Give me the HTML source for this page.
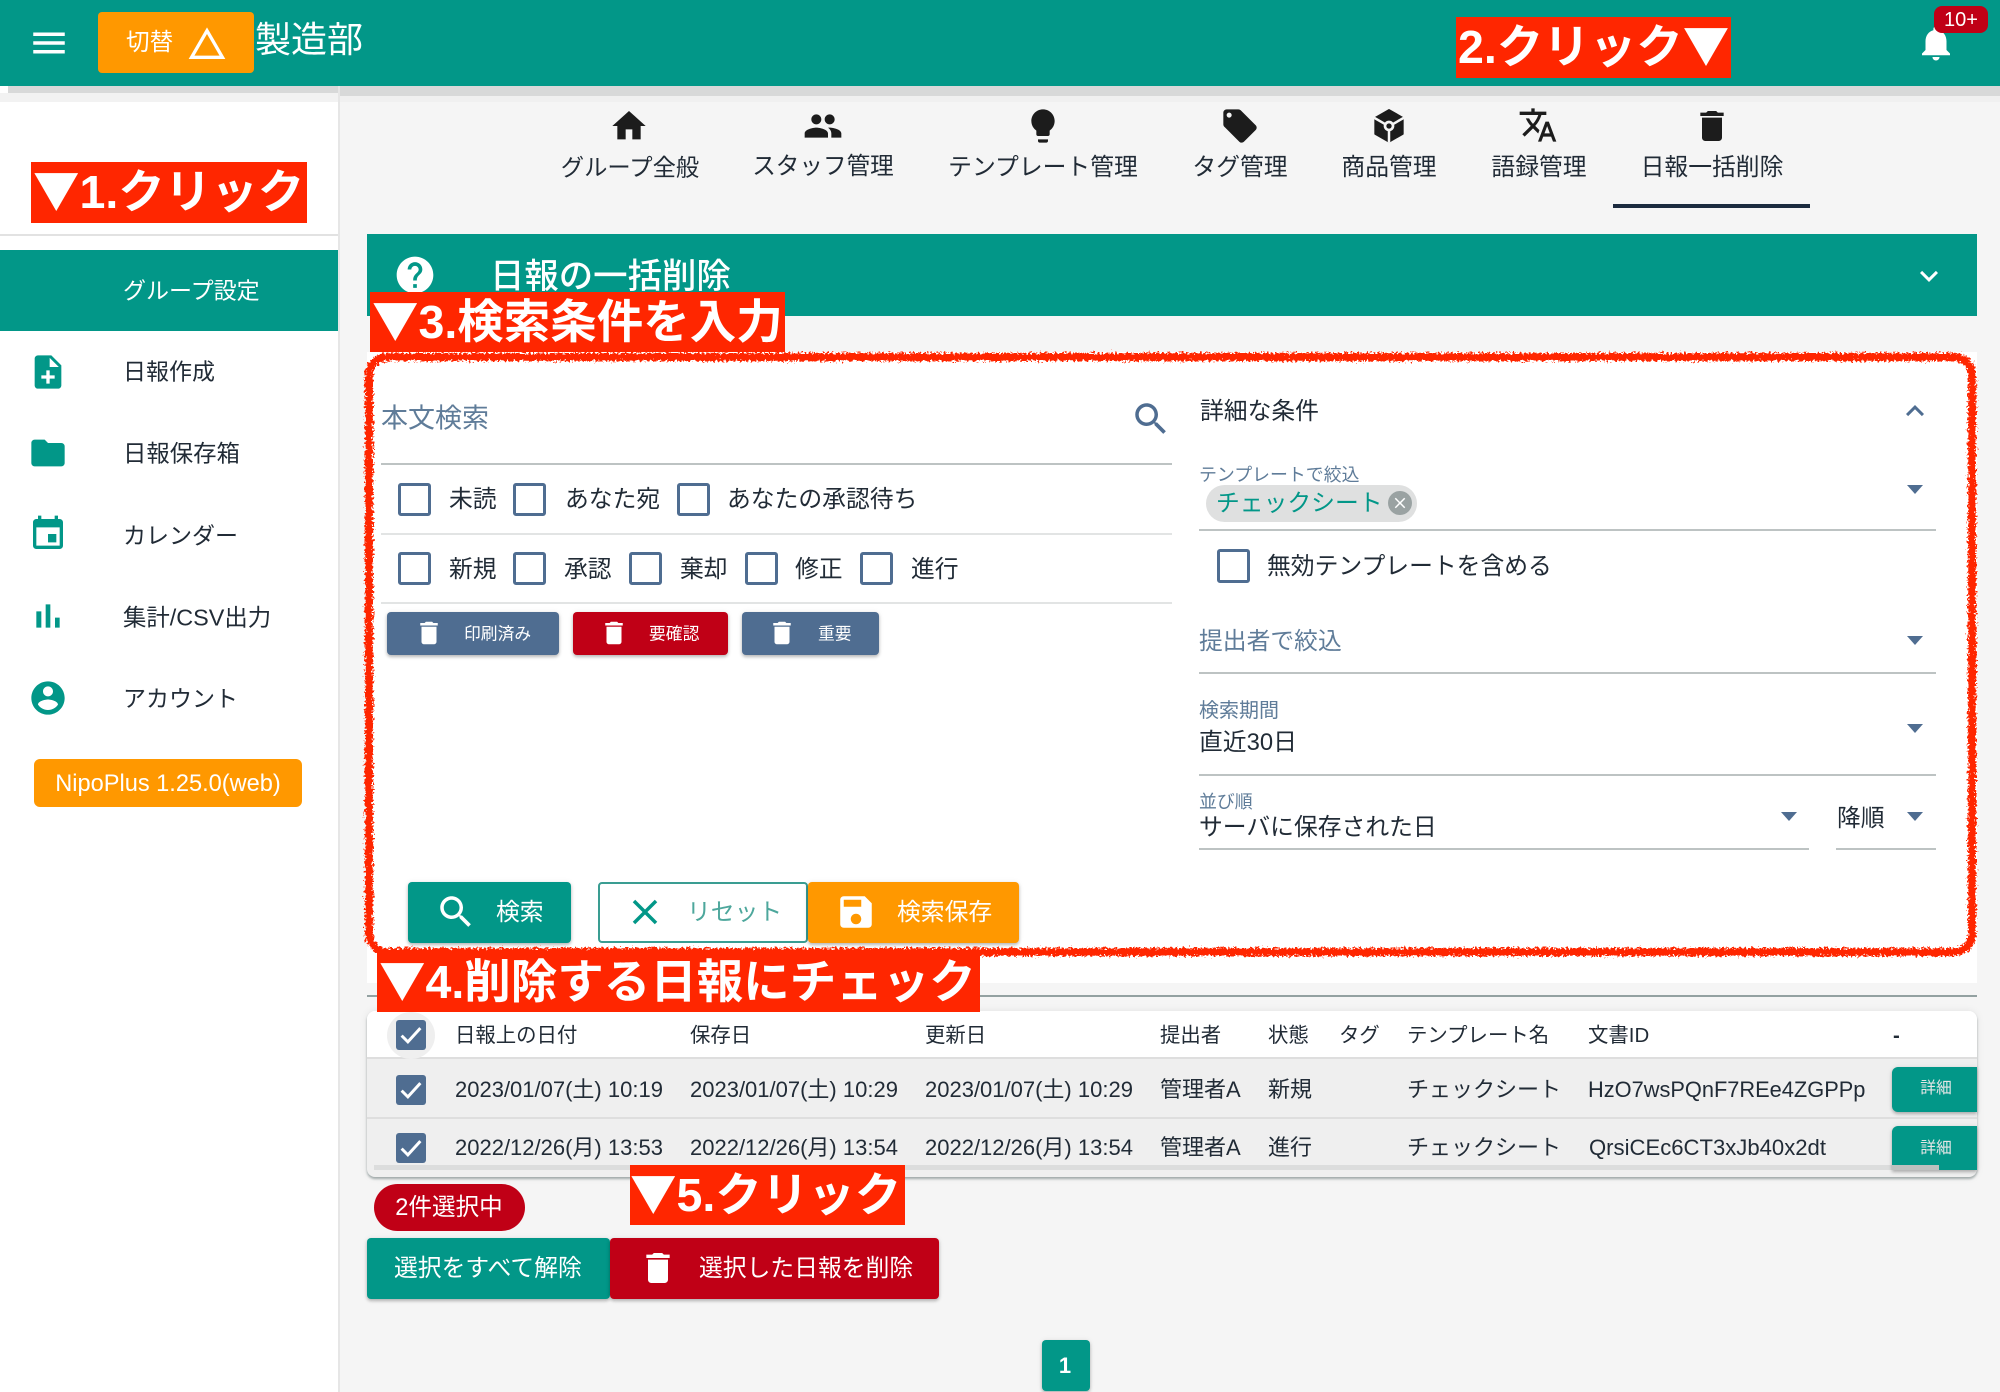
<!DOCTYPE html>
<html lang="ja"><head><meta charset="utf-8"><title>日報の一括削除</title>
<style>
*{box-sizing:border-box}
html,body{margin:0;padding:0;width:2000px;height:1392px;overflow:hidden;background:#f5f5f5}
body{position:relative;font-family:"Liberation Sans","Noto Sans CJK JP",sans-serif;color:#212b36;font-size:23.8px}
.b{position:absolute}
.t{position:absolute;white-space:nowrap;line-height:1;transform:translateY(calc(-50% + 2px))}
.c{position:absolute;white-space:nowrap;line-height:1;transform:translate(-50%,calc(-50% + 2px))}
.lab{position:absolute;background:#ff2600;color:#fff;font-weight:700;font-size:46.5px;line-height:54px;white-space:nowrap;overflow:hidden;padding-left:2px}
.lab span{font-family:"Noto Sans CJK JP",sans-serif}
.i{position:absolute;display:block}
.cb{position:absolute;width:33px;height:33px;border:3.5px solid #4f6d91;border-radius:3px;background:#fff}
.ck{position:absolute;width:30px;height:30px;border-radius:3px;background:#4f6d91}
.line{position:absolute;height:2px;background:#bdc3c3}
.line2{position:absolute;height:2px;background:#e2e4e4}
.btn{position:absolute;border-radius:4px;box-shadow:0 2px 3px rgba(0,0,0,.25),0 0 6px rgba(0,0,0,.07)}
.lbl{color:#5f7c99}
.car{position:absolute;width:0;height:0;border-left:8px solid transparent;border-right:8px solid transparent;border-top:9px solid #4f6d91}
</style></head><body>
<svg width="0" height="0" style="position:absolute"><defs>
<symbol id="menu" viewBox="0 0 24 24"><path d="M3 18h18v-2H3v2zm0-5h18v-2H3v2zm0-7v2h18V6H3z"/></symbol>
<symbol id="warn" viewBox="0 0 24 24"><path d="M12 5.99L19.53 19H4.47L12 5.99M12 2L1 21h22L12 2z"/></symbol>
<symbol id="home" viewBox="0 0 24 24"><path d="M10 20v-6h4v6h5v-8h3L12 3 2 12h3v8z"/></symbol>
<symbol id="people" viewBox="0 0 24 24"><path d="M16 11c1.66 0 2.99-1.34 2.99-3S17.66 5 16 5c-1.66 0-3 1.34-3 3s1.34 3 3 3zm-8 0c1.66 0 2.99-1.34 2.99-3S9.66 5 8 5C6.34 5 5 6.34 5 8s1.34 3 3 3zm0 2c-2.33 0-7 1.17-7 3.5V19h14v-2.5c0-2.33-4.67-3.5-7-3.5zm8 0c-.29 0-.62.02-.97.05 1.16.84 1.97 1.97 1.97 3.45V19h6v-2.5c0-2.33-4.67-3.5-7-3.5z"/></symbol>
<symbol id="bulb" viewBox="0 0 24 24"><path d="M9 21c0 .55.45 1 1 1h4c.55 0 1-.45 1-1v-1H9v1zm3-19C8.14 2 5 5.14 5 9c0 2.38 1.19 4.47 3 5.74V17c0 .55.45 1 1 1h6c.55 0 1-.45 1-1v-2.26c1.81-1.27 3-3.36 3-5.74 0-3.86-3.14-7-7-7z"/></symbol>
<symbol id="tag" viewBox="0 0 24 24"><path d="M21.41 11.58l-9-9C12.05 2.22 11.55 2 11 2H4c-1.1 0-2 .9-2 2v7c0 .55.22 1.05.59 1.42l9 9c.36.36.86.58 1.41.58.55 0 1.05-.22 1.41-.59l7-7c.37-.36.59-.86.59-1.41 0-.55-.23-1.06-.59-1.42zM5.5 7C4.67 7 4 6.33 4 5.5S4.67 4 5.5 4 7 4.67 7 5.5 6.33 7 5.5 7z"/></symbol>
<symbol id="box" viewBox="0 0 24 24"><path d="M12 2.2L20.4 7v9.8L12 21.6l-8.4-4.8V7z" stroke="#1c1c1c" stroke-width=".8" stroke-linejoin="round"/><path d="M3 7l9 5.2M21 7l-9 5.2M12 12v10" fill="none" stroke="#f5f5f5" stroke-width="1.5"/><circle cx="12" cy="12" r="3.2" fill="#f5f5f5"/><circle cx="12" cy="12" r="1.6"/></symbol>
<symbol id="trans" viewBox="0 0 24 24"><path d="M12.87 15.07l-2.54-2.51.03-.03c1.74-1.94 2.98-4.17 3.71-6.53H17V4h-7V2H8v2H1v1.99h11.17C11.5 7.92 10.44 9.75 9 11.35 8.07 10.32 7.3 9.19 6.69 8h-2c.73 1.63 1.73 3.17 2.98 4.56l-5.09 5.02L4 19l5-5 3.11 3.11.76-2.04zM18.5 10h-2L12 22h2l1.12-3h4.75L21 22h2l-4.5-12zm-2.62 7l1.62-4.33L19.12 17h-3.24z"/></symbol>
<symbol id="del" viewBox="0 0 24 24"><path d="M6 19c0 1.1.9 2 2 2h8c1.1 0 2-.9 2-2V7H6v12zM19 4h-3.5l-1-1h-5l-1 1H5v2h14V4z"/></symbol>
<symbol id="help" viewBox="0 0 24 24"><path d="M12 2C6.48 2 2 6.48 2 12s4.48 10 10 10 10-4.48 10-10S17.52 2 12 2zm1 17h-2v-2h2v2zm2.07-7.75l-.9.92C13.45 12.9 13 13.5 13 15h-2v-.5c0-1.1.45-2.1 1.17-2.83l1.24-1.26c.37-.36.59-.86.59-1.41 0-1.1-.9-2-2-2s-2 .9-2 2H8c0-2.21 1.79-4 4-4s4 1.79 4 4c0 .88-.36 1.68-.93 2.25z"/></symbol>
<symbol id="more" viewBox="0 0 24 24"><path d="M16.59 8.59L12 13.17 7.41 8.59 6 10l6 6 6-6z"/></symbol>
<symbol id="less" viewBox="0 0 24 24"><path d="M12 8l-6 6 1.41 1.41L12 10.83l4.59 4.58L18 14z"/></symbol>
<symbol id="search" viewBox="0 0 24 24"><path d="M15.5 14h-.79l-.28-.27C15.41 12.59 16 11.11 16 9.5 16 5.91 13.09 3 9.5 3S3 5.91 3 9.5 5.91 16 9.5 16c1.61 0 3.09-.59 4.23-1.57l.27.28v.79l5 4.99L20.49 19l-4.99-5zm-6 0C7.01 14 5 11.99 5 9.5S7.01 5 9.5 5 14 7.01 14 9.5 11.99 14 9.5 14z"/></symbol>
<symbol id="close" viewBox="0 0 24 24"><path d="M19 6.41L17.59 5 12 10.59 6.41 5 5 6.41 10.59 12 5 17.59 6.41 19 12 13.41 17.59 19 19 17.59 13.41 12 19 6.41z"/></symbol>
<symbol id="save" viewBox="0 0 24 24"><path d="M17 3H5c-1.11 0-2 .9-2 2v14c0 1.1.89 2 2 2h14c1.1 0 2-.9 2-2V7l-4-4zm-5 16c-1.66 0-3-1.34-3-3s1.34-3 3-3 3 1.34 3 3-1.34 3-3 3zm3-10H5V5h10v4z"/></symbol>
<symbol id="note" viewBox="0 0 24 24"><path d="M14 2H6c-1.1 0-1.99.9-1.99 2L4 20c0 1.1.89 2 1.99 2H18c1.1 0 2-.9 2-2V8l-6-6zm2 14h-3v3h-2v-3H8v-2h3v-3h2v3h3v2zm-3-7V3.5L18.5 9H13z"/></symbol>
<symbol id="folder" viewBox="0 0 24 24"><path d="M10 4H4c-1.1 0-1.99.9-1.99 2L2 18c0 1.1.9 2 2 2h16c1.1 0 2-.9 2-2V8c0-1.1-.9-2-2-2h-8l-2-2z"/></symbol>
<symbol id="event" viewBox="0 0 24 24"><path d="M17 12h-5v5h5v-5zM16 1v2H8V1H6v2H5c-1.11 0-1.99.9-1.99 2L3 19c0 1.1.89 2 2 2h14c1.1 0 2-.9 2-2V5c0-1.1-.9-2-2-2h-1V1h-2zm3 18H5V8h14v11z"/></symbol>
<symbol id="bar" viewBox="0 0 24 24"><path d="M5 9.2h3V19H5zM10.6 5h2.8v14h-2.8zm5.6 8H19v6h-2.8z"/></symbol>
<symbol id="acct" viewBox="0 0 24 24"><path d="M12 2C6.48 2 2 6.48 2 12s4.48 10 10 10 10-4.48 10-10S17.52 2 12 2zm0 3c1.66 0 3 1.34 3 3s-1.34 3-3 3-3-1.34-3-3 1.34-3 3-3zm0 14.2c-2.5 0-4.71-1.28-6-3.22.03-1.99 4-3.08 6-3.08 1.99 0 5.97 1.09 6 3.08-1.29 1.94-3.5 3.22-6 3.22z"/></symbol>
<symbol id="bell" viewBox="0 0 24 24"><path d="M12 22c1.1 0 2-.9 2-2h-4c0 1.1.89 2 2 2zm6-6v-5c0-3.07-1.64-5.64-4.5-6.32V4c0-.83-.67-1.5-1.5-1.5s-1.5.67-1.5 1.5v.68C7.63 5.36 6 7.92 6 11v5l-2 2v1h16v-1l-2-2z"/></symbol>
<symbol id="chk" viewBox="0 0 24 24"><path d="M4.5 12.5l5 5L19.5 6.5" fill="none" stroke="#fff" stroke-width="2.4"/></symbol>
<filter id="rough" x="-2%" y="-4%" width="104%" height="108%"><feTurbulence type="fractalNoise" baseFrequency=".45" numOctaves="3" seed="4"/><feDisplacementMap in="SourceGraphic" scale="8" xChannelSelector="R" yChannelSelector="G"/></filter>
</defs></svg>

<!-- sidebar -->
<div class="b" style="left:0;top:85px;width:338px;height:1307px;background:#fff"></div>
<div class="b" style="left:338px;top:85px;width:2px;height:1307px;background:#e6e6e6"></div>
<!-- header shadow -->
<div class="b" style="left:0;top:93px;width:338px;height:9px;background:#f2f2f2"></div>
<div class="b" style="left:340px;top:96px;width:1660px;height:6px;background:#f0f0f0"></div>
<div class="b" style="left:8px;top:85px;width:330px;height:8px;background:#d8d9d9"></div>
<div class="b" style="left:340px;top:85px;width:1660px;height:11px;background:#d8d9d9"></div>
<!-- header -->
<div class="b" style="left:0;top:0;width:2000px;height:85.5px;background:#029788"></div>
<svg class="i" style="left:28px;top:22px" width="42" height="42" fill="#fff"><use href="#menu"/></svg>
<div class="b" style="left:98px;top:12px;width:156px;height:61px;background:#ff9800;border-radius:4px"></div>
<div class="t" style="left:126px;top:42px;color:#fff;font-size:23.6px">切替</div>
<svg class="i" style="left:187px;top:24px" width="40" height="40" fill="#fff"><use href="#warn"/></svg>
<div class="t" style="left:255px;top:38px;color:#fff;font-size:36px">製造部</div>
<svg class="i" style="left:1915px;top:22px" width="42" height="42" fill="#fff"><use href="#bell"/></svg>
<div class="b" style="left:1934px;top:6px;width:54px;height:27px;background:#c00016;border-radius:8px"></div>
<div class="c" style="left:1961px;top:18px;color:#fff;font-size:20px">10+</div>

<!-- sidebar content -->
<div class="b" style="left:0;top:234px;width:338px;height:2px;background:#e2e2e2"></div>
<div class="b" style="left:0;top:250px;width:338px;height:81px;background:#029788"></div>
<div class="t" style="left:123px;top:289px;color:#fff;font-size:23px">グループ設定</div>
<svg class="i" style="left:28px;top:352px" width="40" height="40" fill="#029788"><use href="#note"/></svg>
<div class="t" style="left:123px;top:370px;font-size:23px">日報作成</div>
<svg class="i" style="left:28px;top:433px" width="40" height="40" fill="#029788"><use href="#folder"/></svg>
<div class="t" style="left:123px;top:452px;font-size:23.4px">日報保存箱</div>
<svg class="i" style="left:28px;top:514px" width="40" height="40" fill="#029788"><use href="#event"/></svg>
<div class="t" style="left:123px;top:534px;font-size:23px">カレンダー</div>
<svg class="i" style="left:28px;top:596px" width="40" height="40" fill="#029788"><use href="#bar"/></svg>
<div class="t" style="left:123px;top:616px;font-size:23.4px">集計/CSV出力</div>
<svg class="i" style="left:28px;top:678px" width="40" height="40" fill="#029788"><use href="#acct"/></svg>
<div class="t" style="left:123px;top:697px;font-size:23px">アカウント</div>
<div class="b" style="left:34px;top:759px;width:268px;height:48px;background:#ff9800;border-radius:6px"></div>
<div class="c" style="left:168px;top:783px;color:#fff;font-size:23.6px">NipoPlus 1.25.0(web)</div>

<!-- tabs -->
<svg class="i" style="left:609px;top:106px" width="40" height="40" fill="#1c1c1c"><use href="#home"/></svg>
<div class="c" style="left:630px;top:166px;font-size:23.3px">グループ全般</div>
<svg class="i" style="left:803px;top:106px" width="40" height="40" fill="#1c1c1c"><use href="#people"/></svg>
<div class="c" style="left:823px;top:166px;font-size:23.6px">スタッフ管理</div>
<svg class="i" style="left:1023px;top:106px" width="40" height="40" fill="#1c1c1c"><use href="#bulb"/></svg>
<div class="c" style="left:1043px;top:166px;font-size:23.8px">テンプレート管理</div>
<svg class="i" style="left:1220px;top:106px" width="40" height="40" fill="#1c1c1c"><use href="#tag"/></svg>
<div class="c" style="left:1240px;top:166px;font-size:23.8px">タグ管理</div>
<svg class="i" style="left:1369px;top:106px" width="40" height="40" fill="#1c1c1c"><use href="#box"/></svg>
<div class="c" style="left:1389px;top:166px;font-size:23.8px">商品管理</div>
<svg class="i" style="left:1518px;top:105px" width="40" height="40" fill="#1c1c1c"><use href="#trans"/></svg>
<div class="c" style="left:1539px;top:166px;font-size:23.8px">語録管理</div>
<svg class="i" style="left:1692px;top:106px" width="40" height="40" fill="#1c1c1c"><use href="#del"/></svg>
<div class="c" style="left:1712px;top:166px;font-size:23.8px">日報一括削除</div>
<div class="b" style="left:1613px;top:204px;width:197px;height:4px;background:#1c2b3f"></div>

<!-- panel header -->
<div class="b" style="left:367px;top:234px;width:1610px;height:82px;background:#029788"></div>
<svg class="i" style="left:393px;top:253px" width="44" height="44" fill="#fff"><use href="#help"/></svg>
<div class="t" style="left:490px;top:275px;color:#fff;font-size:34.4px;font-weight:500">日報の一括削除</div>
<svg class="i" style="left:1911px;top:258px" width="36" height="36" fill="#fff"><use href="#more"/></svg>

<!-- white panel -->
<div class="b" style="left:367px;top:352px;width:1610px;height:631px;background:#fff"></div>

<!-- search left -->
<div class="t lbl" style="left:381px;top:417px;font-size:27px">本文検索</div>
<svg class="i" style="left:1130px;top:398px" width="42" height="42" fill="#4f6d91"><use href="#search"/></svg>
<div class="line" style="left:381px;top:463px;width:791px"></div>
<div class="cb" style="left:398px;top:483px"></div><div class="t" style="left:449px;top:498px">未読</div>
<div class="cb" style="left:513px;top:483px"></div><div class="t" style="left:565px;top:498px">あなた宛</div>
<div class="cb" style="left:677px;top:483px"></div><div class="t" style="left:727px;top:498px">あなたの承認待ち</div>
<div class="line2" style="left:381px;top:533px;width:791px"></div>
<div class="cb" style="left:398px;top:552px"></div><div class="t" style="left:449px;top:568px">新規</div>
<div class="cb" style="left:513px;top:552px"></div><div class="t" style="left:564px;top:568px">承認</div>
<div class="cb" style="left:629px;top:552px"></div><div class="t" style="left:680px;top:568px">棄却</div>
<div class="cb" style="left:745px;top:552px"></div><div class="t" style="left:795px;top:568px">修正</div>
<div class="cb" style="left:860px;top:552px"></div><div class="t" style="left:911px;top:568px">進行</div>
<div class="line2" style="left:381px;top:602px;width:791px"></div>

<div class="btn" style="left:387px;top:612px;width:172px;height:43px;background:#4f6d91"></div>
<svg class="i" style="left:414px;top:618px" width="30" height="30" fill="#fff"><use href="#del"/></svg>
<div class="t" style="left:464px;top:633px;color:#fff;font-size:16.8px">印刷済み</div>
<div class="btn" style="left:573px;top:612px;width:155px;height:43px;background:#c00016"></div>
<svg class="i" style="left:599px;top:618px" width="30" height="30" fill="#fff"><use href="#del"/></svg>
<div class="t" style="left:649px;top:633px;color:#fff;font-size:16.8px">要確認</div>
<div class="btn" style="left:742px;top:612px;width:137px;height:43px;background:#4f6d91"></div>
<svg class="i" style="left:767px;top:618px" width="30" height="30" fill="#fff"><use href="#del"/></svg>
<div class="t" style="left:818px;top:633px;color:#fff;font-size:16.8px">重要</div>

<!-- right col -->
<div class="t" style="left:1200px;top:410px">詳細な条件</div>
<svg class="i" style="left:1897px;top:393px" width="36" height="36" fill="#4f6d91"><use href="#less"/></svg>
<div class="t lbl" style="left:1199px;top:474px;font-size:17.9px">テンプレートで絞込</div>
<div class="b" style="left:1206px;top:485px;width:211px;height:37px;background:#dfe0e0;border-radius:19px"></div>
<div class="t" style="left:1216px;top:502px;color:#029788">チェックシート</div>
<div class="b" style="left:1388px;top:491px;width:24px;height:24px;border-radius:50%;background:#9aa2a2"></div>
<svg class="i" style="left:1391px;top:494px" width="18" height="18" fill="#fff"><use href="#close"/></svg>
<div class="car" style="left:1907px;top:485px"></div>
<div class="line" style="left:1199px;top:529px;width:737px"></div>
<div class="cb" style="left:1217px;top:549px;height:34px"></div>
<div class="t" style="left:1267px;top:565px">無効テンプレートを含める</div>
<div class="t lbl" style="left:1199px;top:640px">提出者で絞込</div>
<div class="car" style="left:1907px;top:636px"></div>
<div class="line" style="left:1199px;top:672px;width:737px"></div>
<div class="t lbl" style="left:1199px;top:709px;font-size:20px">検索期間</div>
<div class="t" style="left:1199px;top:741px">直近30日</div>
<div class="car" style="left:1907px;top:724px"></div>
<div class="line" style="left:1199px;top:774px;width:737px"></div>
<div class="t lbl" style="left:1199px;top:801px;font-size:17.9px">並び順</div>
<div class="t" style="left:1199px;top:826px">サーバに保存された日</div>
<div class="car" style="left:1781px;top:812px"></div>
<div class="line" style="left:1199px;top:848px;width:610px"></div>
<div class="t" style="left:1837px;top:817px">降順</div>
<div class="car" style="left:1907px;top:812px"></div>
<div class="line" style="left:1836px;top:848px;width:100px"></div>

<!-- action buttons -->
<div class="btn" style="left:408px;top:882px;width:163px;height:61px;background:#029788"></div>
<svg class="i" style="left:435px;top:891px" width="42" height="42" fill="#fff"><use href="#search"/></svg>
<div class="t" style="left:496px;top:911px;color:#fff">検索</div>
<div class="b" style="left:598px;top:882px;width:210px;height:61px;background:#fff;border:2px solid #3a9d92;border-radius:4px"></div>
<svg class="i" style="left:624px;top:891px" width="42" height="42" fill="#029788"><use href="#close"/></svg>
<div class="t" style="left:687px;top:911px;color:#4da79c">リセット</div>
<div class="btn" style="left:808px;top:882px;width:211px;height:61px;background:#ff9800"></div>
<svg class="i" style="left:835px;top:891px" width="42" height="42" fill="#fff"><use href="#save"/></svg>
<div class="t" style="left:897px;top:911px;color:#fff">検索保存</div>

<!-- divider -->
<div class="b" style="left:367px;top:995px;width:1610px;height:2px;background:#93a1a1"></div>

<!-- table -->
<div class="b" style="left:367px;top:1011px;width:1610px;height:166px;background:#efefef;border-radius:8px;box-shadow:0 2px 2px rgba(70,90,90,.45),0 0 8px rgba(0,0,0,.08)"></div>
<div class="b" style="left:367px;top:1011px;width:1610px;height:48px;background:#fff;border-radius:8px 8px 0 0;border-bottom:2px solid #dedede"></div>
<div class="b" style="left:367px;top:1117px;width:1610px;height:2px;background:#dedede"></div>
<div class="b" style="left:387px;top:1012px;width:48px;height:47px;border-radius:50%;background:#efefef"></div>
<div class="ck" style="left:396px;top:1020px"></div><svg class="i" style="left:396px;top:1020px" width="30" height="30"><use href="#chk"/></svg>
<div class="ck" style="left:396px;top:1075px"></div><svg class="i" style="left:396px;top:1075px" width="30" height="30"><use href="#chk"/></svg>
<div class="ck" style="left:396px;top:1133px"></div><svg class="i" style="left:396px;top:1133px" width="30" height="30"><use href="#chk"/></svg>

<div class="t" style="left:455px;top:1034px;font-size:20.4px">日報上の日付</div>
<div class="t" style="left:690px;top:1034px;font-size:20.4px">保存日</div>
<div class="t" style="left:925px;top:1034px;font-size:20.4px">更新日</div>
<div class="t" style="left:1160px;top:1034px;font-size:20.4px">提出者</div>
<div class="t" style="left:1268px;top:1034px;font-size:20.4px">状態</div>
<div class="t" style="left:1339px;top:1034px;font-size:20.4px">タグ</div>
<div class="t" style="left:1407px;top:1034px;font-size:20.4px">テンプレート名</div>
<div class="t" style="left:1588px;top:1034px;font-size:20.4px">文書ID</div>
<div class="t" style="left:1893px;top:1034px;font-size:20.4px;font-weight:700">-</div>

<div class="t" style="left:455px;top:1088px;font-size:22px">2023/01/07(土) 10:19</div>
<div class="t" style="left:690px;top:1088px;font-size:22px">2023/01/07(土) 10:29</div>
<div class="t" style="left:925px;top:1088px;font-size:22px">2023/01/07(土) 10:29</div>
<div class="t" style="left:1160px;top:1088px;font-size:22px">管理者A</div>
<div class="t" style="left:1268px;top:1088px;font-size:22px">新規</div>
<div class="t" style="left:1407px;top:1088px;font-size:22px">チェックシート</div>
<div class="t" style="left:1588px;top:1088px;font-size:21.8px">HzO7wsPQnF7REe4ZGPPp</div>
<div class="btn" style="left:1892px;top:1067px;width:85px;height:45px;background:#029788;border-radius:6px 0 0 6px"></div>
<div class="c" style="left:1936px;top:1087px;color:#e6e6e6;font-size:15.8px">詳細</div>

<div class="t" style="left:455px;top:1146px;font-size:22px">2022/12/26(月) 13:53</div>
<div class="t" style="left:690px;top:1146px;font-size:22px">2022/12/26(月) 13:54</div>
<div class="t" style="left:925px;top:1146px;font-size:22px">2022/12/26(月) 13:54</div>
<div class="t" style="left:1160px;top:1146px;font-size:22px">管理者A</div>
<div class="t" style="left:1268px;top:1146px;font-size:22px">進行</div>
<div class="t" style="left:1407px;top:1146px;font-size:22px">チェックシート</div>
<div class="t" style="left:1589px;top:1146px;font-size:22.1px">QrsiCEc6CT3xJb40x2dt</div>
<div class="b" style="left:374px;top:1165px;width:1518px;height:5px;background:#dcdddd"></div>
<div class="btn" style="left:1892px;top:1126px;width:85px;height:44px;background:#029788;border-radius:6px 0 0 0"></div>
<div class="b" style="left:1892px;top:1165px;width:47px;height:5px;background:#bcc1bf"></div>
<div class="c" style="left:1936px;top:1147px;color:#e6e6e6;font-size:15.8px">詳細</div>

<!-- bottom -->
<div class="b" style="left:374px;top:1184px;width:151px;height:47px;background:#c00016;border-radius:24px"></div>
<div class="c" style="left:449px;top:1207px;color:#fff;font-size:23.6px">2件選択中</div>
<div class="btn" style="left:367px;top:1238px;width:243px;height:61px;background:#029788"></div>
<div class="t" style="left:394px;top:1267px;color:#fff">選択をすべて解除</div>
<div class="btn" style="left:610px;top:1238px;width:329px;height:61px;background:#c00016"></div>
<svg class="i" style="left:638px;top:1248px" width="40" height="40" fill="#fff"><use href="#del"/></svg>
<div class="t" style="left:699px;top:1267px;color:#fff">選択した日報を削除</div>
<div class="btn" style="left:1042px;top:1340px;width:48px;height:51px;background:#029788"></div>
<div class="c" style="left:1065px;top:1364px;color:#fff;font-size:22px;font-weight:700">1</div>

<!-- red hand-drawn frame -->
<svg class="i" style="left:0;top:0;pointer-events:none" width="2000" height="1392"><rect x="369" y="357" width="1603" height="595" rx="18" fill="none" stroke="#ff2600" stroke-width="8" filter="url(#rough)"/></svg>

<!-- red labels -->
<div class="lab" style="left:31px;top:162px;width:276px;height:61px"><span>▼</span>1.クリック</div>
<div class="lab" style="left:1456px;top:17px;width:275px;height:61px">2.クリック<span>▼</span></div>
<div class="lab" style="left:370px;top:292px;width:415px;height:60px"><span>▼</span>3.検索条件を入力</div>
<div class="lab" style="left:377px;top:952px;width:603px;height:60px"><span>▼</span>4.削除する日報にチェック</div>
<div class="lab" style="left:630px;top:1165px;width:275px;height:60px;padding-left:0"><span>▼</span>5.クリック</div>
</body></html>
